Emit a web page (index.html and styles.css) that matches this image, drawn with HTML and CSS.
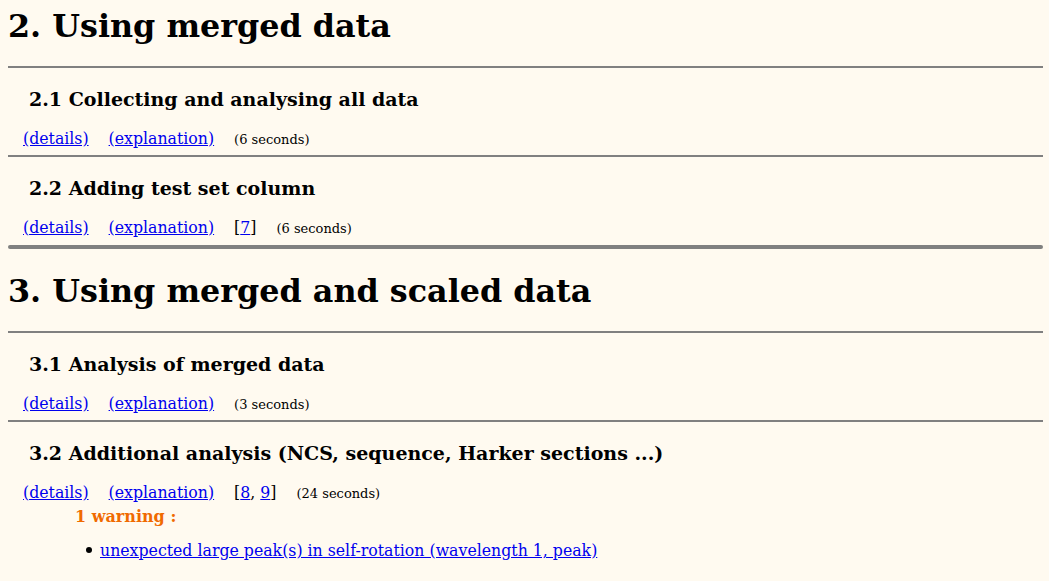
FILE: index.html
```html
<!DOCTYPE html>
<html>
<head>
<meta charset="utf-8">
<link rel="stylesheet" href="styles.css">
</head>
<body>
<section class="part">
  <h1 class="part-title">2. Using merged data</h1>
  <div class="step">
    <hr class="rule">
    <h3 class="step-title">2.1 Collecting and analysing all data</h3>
    <div class="links">
      <a href="#">(details)</a>
      <a href="#">(explanation)</a>
      <span class="time">(6 seconds)</span>
    </div>
  </div>
  <div class="step">
    <hr class="rule">
    <h3 class="step-title">2.2 Adding test set column</h3>
    <div class="links">
      <a href="#">(details)</a>
      <a href="#">(explanation)</a>
      <span class="refs">[<a href="#">7</a>]</span>
      <span class="time">(6 seconds)</span>
    </div>
  </div>
</section>
<hr class="thick">
<section class="part">
  <h1 class="part-title second">3. Using merged and scaled data</h1>
  <div class="step">
    <hr class="rule">
    <h3 class="step-title">3.1 Analysis of merged data</h3>
    <div class="links">
      <a href="#">(details)</a>
      <a href="#">(explanation)</a>
      <span class="time">(3 seconds)</span>
    </div>
  </div>
  <div class="step">
    <hr class="rule">
    <h3 class="step-title">3.2 Additional analysis (NCS, sequence, Harker sections ...)</h3>
    <div class="links">
      <a href="#">(details)</a>
      <a href="#">(explanation)</a>
      <span class="refs">[<a href="#">8</a>, <a href="#">9</a>]</span>
      <span class="time">(24 seconds)</span>
    </div>
    <div class="warnings">
      <div class="warn-title">1 warning :</div>
      <ul class="warn-list">
        <li class="warn-item"><a href="#">unexpected large peak(s) in self-rotation (wavelength 1, peak)</a></li>
      </ul>
    </div>
  </div>
</section>
</body>
</html>
```
FILE: styles.css
```css
html, body {
  background: #fffaf0;
}
body {
  margin: 0;
  padding: 0 6px 0 8px;
  font-family: "DejaVu Serif", serif;
  color: #000;
}
a {
  color: #0000ee;
}
.part-title {
  margin: 0;
  padding-top: 6px;
  font-size: 31.8px;
  line-height: 40px;
  font-weight: bold;
}
.part-title.second {
  padding-top: 0;
  margin-top: 22.5px;
}
.rule {
  margin: 4.5px 0 0;
  border: none;
  height: 2px;
  background: #808080;
}
.part-title + .step > .rule {
  margin-top: 20px;
}
.step-title {
  margin: 19px 0 0;
  padding-left: 21px;
  font-size: 19px;
  line-height: 24px;
  font-weight: bold;
}
.links {
  display: flex;
  align-items: baseline;
  gap: 20px;
  padding-left: 15px;
  margin-top: 18px;
  font-size: 15.75px;
  line-height: 20px;
}
.time {
  font-size: 13px;
}
.warnings {
  padding-left: 67px;
  margin-top: 3px;
}
.warn-title {
  color: #f06a00;
  font-weight: bold;
  font-size: 16px;
  line-height: 20px;
}
.warn-list {
  margin: 14.5px 0 0;
  padding-left: 11px;
  list-style: none;
  font-size: 15.75px;
  line-height: 20px;
}
.warn-item::before {
  content: "";
  display: inline-block;
  width: 6px;
  height: 6px;
  border-radius: 50%;
  background: #000;
  margin-right: 8px;
  vertical-align: 3px;
}
.thick {
  margin: 6px 0 0;
  border: none;
  height: 4px;
  border-radius: 2px;
  background: #808080;
}
```
